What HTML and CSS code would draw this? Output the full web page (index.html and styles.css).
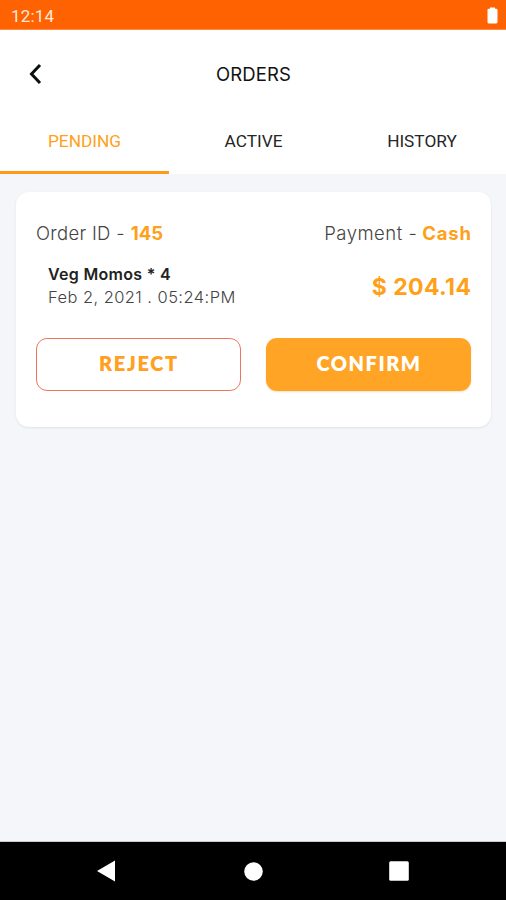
FILE: index.html
```html
<!DOCTYPE html>
<html lang="en">
<head>
<meta charset="utf-8">
<title>Orders</title>
<link rel="stylesheet" href="styles.css">
</head>
<body>
<div class="screen">
  <div class="status">
    <span class="clock">12:14</span>
    <svg class="battery" width="11" height="17" viewBox="0 0 11 17"><path d="M3 1.8V.5h5v1.3h1.2q1.3 0 1.3 1.3v12q0 1.400-1.300 1.400H1.800Q.5 16.500.5 15.100V3.100Q.5 1.800 1.800 1.800z" fill="#fff"/></svg>
  </div>
  <header class="header">
    <svg class="back" width="14" height="22" viewBox="0 0 14 22"><path d="M12 2 3.500 11l8.500 9" fill="none" stroke="#08110f" stroke-width="3"/></svg>
    <h1 class="title">ORDERS</h1>
  </header>
  <nav class="tabs">
    <div class="tab active">PENDING</div>
    <div class="tab">ACTIVE</div>
    <div class="tab">HISTORY</div>
  </nav>
  <main class="content">
    <article class="card">
      <div class="row summary">
        <div><span class="order">Order ID -</span><b class="number">145</b></div>
        <div><span class="payment">Payment -</span><b class="method">Cash</b></div>
      </div>
      <div class="row details">
        <div class="item">
          <div class="name">Veg Momos * 4</div>
          <div class="date">Feb 2, 2021 . 05:24:PM</div>
        </div>
        <div class="price">$ 204.14</div>
      </div>
      <div class="row actions">
        <button class="button reject">REJECT</button>
        <button class="button confirm">CONFIRM</button>
      </div>
    </article>
  </main>
  <footer class="navbar">
    <svg width="18" height="22" viewBox="0 0 18 22"><path d="M0 11 18 .5v21z" fill="#fff"/></svg>
    <svg width="19" height="19" viewBox="0 0 19 19"><circle cx="9.500" cy="9.500" r="9.300" fill="#fff"/></svg>
    <svg width="20" height="20" viewBox="0 0 20 20"><rect x=".2" y=".2" width="19.600" height="19.600" rx="1.500" fill="#fff"/></svg>
  </footer>
</div>
</body>
</html>
```

FILE: styles.css
```css
* { box-sizing: border-box; }
body { margin: 0; font-family: Inter, "Liberation Sans", sans-serif; }
.screen { width: 506px; height: 900px; display: flex; flex-direction: column; background: #f4f6fa; overflow: hidden; white-space: nowrap; }
.status { height: 30px; flex: none; display: flex; justify-content: space-between; padding: 7px 8px 0 11px; background: #ff6200; border-bottom: 1px solid #ff8b45; }
.clock { font: 400 17px/19px Roboto, sans-serif; color: #ffe9dc; letter-spacing: .2px; }
.battery { display: block; }
.header { height: 78px; flex: none; display: grid; grid-template-columns: 42px 1fr 42px; align-items: center; padding-top: 10px; background: #fff; }
.back { justify-self: end; }
.title { margin: 0; text-align: center; font-size: 18.500px; font-weight: 400; line-height: 24px; color: #111; letter-spacing: .15px; padding-left: 1px; }
.tabs { height: 66px; flex: none; display: grid; grid-template-columns: 169px 169px 168px; background: #fff; }
.tab { display: flex; justify-content: center; padding-top: 22px; border-bottom: 3px solid transparent; font: 400 17.250px/22px Roboto, sans-serif; color: #252525; }
.tab.active { color: #ff9f1a; border-color: #ff9a16; }
.content { flex: 1; padding: 18px 15px 0 16px; }
.card { height: 235px; padding: 28px 20px 0; border-radius: 13px; background: #fff; box-shadow: 0 1px 2px #cbd0d780; }
.row { display: flex; justify-content: space-between; }
.summary { height: 44px; font-size: 18.500px; line-height: 26px; color: #444; font-weight: 300; }
.order { letter-spacing: .3px; }
.payment { letter-spacing: .5px; }
.number, .method { margin-left: 6px; color: #ff9f1a; font-weight: 700; }
.method { letter-spacing: .8px; margin-right: -.8px; margin-left: 5px; }
.details { height: 74px; padding-left: 12px; }
.name { font-size: 16px; line-height: 21px; font-weight: 600; color: #222; letter-spacing: .3px; }
.date { font-size: 16.500px; line-height: 24px; font-weight: 300; color: #444; letter-spacing: .43px; }
.price { font-size: 23px; line-height: 46px; font-weight: 700; color: #ff9f1a; letter-spacing: .4px; margin-right: -.4px; }
.button { width: 205px; height: 53px; padding: 0 0 3px 1px; border: 0; border-radius: 11px; font-family: Lato, sans-serif; font-size: 20px; font-weight: 800; letter-spacing: 1.700px; }
.reject { border: 1.500px solid #ed765b; background: #fff; color: #ffa020; }
.confirm { background: #ffa424; color: #fff; box-shadow: 0 1px 2px #d6a96055; letter-spacing: 1.500px; }
.navbar { height: 58px; flex: none; display: flex; align-items: center; background: #000; box-shadow: 0 -1px #c9cbcd; padding-left: 97px; }
.navbar svg:nth-child(2) { margin-left: 129px; }
.navbar svg:nth-child(3) { margin-left: 126px; }
```
